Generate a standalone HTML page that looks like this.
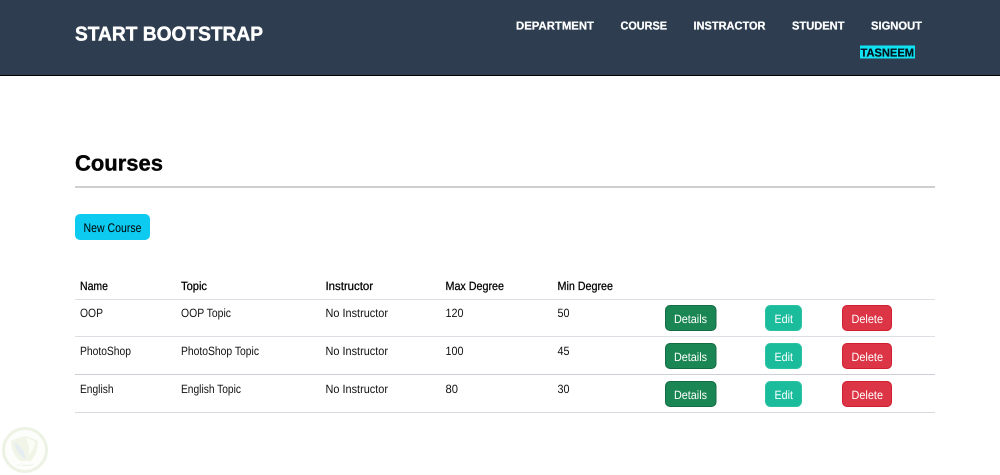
<!DOCTYPE html>
<html lang="en">
<head>
<meta charset="utf-8">
<title>Courses</title>
<style>
html,body{margin:0;padding:0;background:#fff;width:1000px;height:475px;overflow:hidden}
svg{display:block}
text{font-family:"Liberation Sans",sans-serif;text-rendering:geometricPrecision}
.b{font-weight:bold}
.n{font-size:11.5px;font-weight:bold;fill:#fff;stroke:#fff;stroke-width:.25px}
.t{font-size:12px;fill:#111}
.h{font-size:12px;fill:#000;stroke:#000;stroke-width:.25px}
.w{font-size:12px;fill:#fff}
</style>
</head>
<body>
<svg width="1000" height="475" viewBox="0 0 1000 475" xmlns="http://www.w3.org/2000/svg">
<rect width="1000" height="75" fill="#2e3e50"/>
<rect y="75" width="1000" height="1" fill="#000"/>
<text class="b" x="75" y="40.5" font-size="20" fill="#fff" stroke="#fff" stroke-width=".45" textLength="188" lengthAdjust="spacingAndGlyphs">START BOOTSTRAP</text>
<text class="n" x="516" y="29.5" textLength="78" lengthAdjust="spacingAndGlyphs">DEPARTMENT</text>
<text class="n" x="620.5" y="29.5" textLength="46.5" lengthAdjust="spacingAndGlyphs">COURSE</text>
<text class="n" x="693.5" y="29.5" textLength="72" lengthAdjust="spacingAndGlyphs">INSTRACTOR</text>
<text class="n" x="792" y="29.5" textLength="52.5" lengthAdjust="spacingAndGlyphs">STUDENT</text>
<text class="n" x="871" y="29.5" textLength="51" lengthAdjust="spacingAndGlyphs">SIGNOUT</text>
<rect x="860" y="45.5" width="55" height="13" fill="#10e2f2"/>
<text class="n" x="860.5" y="56.5" style="fill:#04121c;stroke:#04121c" textLength="53.5" lengthAdjust="spacingAndGlyphs">TASNEEM</text>

<text class="b" x="75" y="170.5" font-size="22" fill="#050505" stroke="#050505" stroke-width=".4" textLength="88" lengthAdjust="spacingAndGlyphs">Courses</text>
<rect x="75" y="186" width="860" height="2" fill="#cfcfcf"/>

<rect x="75" y="214" width="75" height="26" rx="5" fill="#0dcaf0"/>
<text class="t" x="83.5" y="232" style="font-size:12.5px;fill:#000" textLength="58" lengthAdjust="spacingAndGlyphs">New Course</text>

<text class="h" x="80" y="290" textLength="28" lengthAdjust="spacingAndGlyphs">Name</text>
<text class="h" x="181" y="290" textLength="26" lengthAdjust="spacingAndGlyphs">Topic</text>
<text class="h" x="325.5" y="290" textLength="47.5" lengthAdjust="spacingAndGlyphs">Instructor</text>
<text class="h" x="445.5" y="290" textLength="58.5" lengthAdjust="spacingAndGlyphs">Max Degree</text>
<text class="h" x="557.5" y="290" textLength="55.5" lengthAdjust="spacingAndGlyphs">Min Degree</text>

<rect x="75" y="299" width="860" height="1" fill="#dcdfe4"/>
<rect x="75" y="336" width="860" height="1" fill="#dcdfe4"/>
<rect x="75" y="374" width="860" height="1" fill="#ccd0d6"/>
<rect x="75" y="412" width="860" height="1" fill="#d6d9dd"/>

<text class="t" x="80" y="317" textLength="23" lengthAdjust="spacingAndGlyphs">OOP</text>
<text class="t" x="181" y="317" textLength="50" lengthAdjust="spacingAndGlyphs">OOP Topic</text>
<text class="t" x="325.5" y="317" textLength="62.5" lengthAdjust="spacingAndGlyphs">No Instructor</text>
<text class="t" x="445.5" y="317" textLength="18" lengthAdjust="spacingAndGlyphs">120</text>
<text class="t" x="557.5" y="317" textLength="12" lengthAdjust="spacingAndGlyphs">50</text>

<text class="t" x="80" y="355" textLength="51" lengthAdjust="spacingAndGlyphs">PhotoShop</text>
<text class="t" x="181" y="355" textLength="78" lengthAdjust="spacingAndGlyphs">PhotoShop Topic</text>
<text class="t" x="325.5" y="355" textLength="62.5" lengthAdjust="spacingAndGlyphs">No Instructor</text>
<text class="t" x="445.5" y="355" textLength="18" lengthAdjust="spacingAndGlyphs">100</text>
<text class="t" x="557.5" y="355" textLength="12" lengthAdjust="spacingAndGlyphs">45</text>

<text class="t" x="80" y="393" textLength="33.5" lengthAdjust="spacingAndGlyphs">English</text>
<text class="t" x="181" y="393" textLength="60" lengthAdjust="spacingAndGlyphs">English Topic</text>
<text class="t" x="325.5" y="393" textLength="62.5" lengthAdjust="spacingAndGlyphs">No Instructor</text>
<text class="t" x="445.5" y="393" textLength="12.5" lengthAdjust="spacingAndGlyphs">80</text>
<text class="t" x="557.5" y="393" textLength="12" lengthAdjust="spacingAndGlyphs">30</text>

<rect x="665.5" y="305.5" width="50.5" height="25" rx="4.5" fill="#1a8653" stroke="#146c43"/>
<rect x="765.5" y="305.5" width="36" height="25" rx="5" fill="#1abc9c" stroke="#2cc2a4"/>
<rect x="842.5" y="305.5" width="49" height="25" rx="4.5" fill="#dc3545" stroke="#cf1f30"/>
<text class="w" x="674" y="322.8" textLength="33" lengthAdjust="spacingAndGlyphs">Details</text>
<text class="w" x="774.5" y="322.8" textLength="18.5" lengthAdjust="spacingAndGlyphs">Edit</text>
<text class="w" x="851.5" y="322.8" textLength="31.5" lengthAdjust="spacingAndGlyphs">Delete</text>

<rect x="665.5" y="343.5" width="50.5" height="25" rx="4.5" fill="#1a8653" stroke="#146c43"/>
<rect x="765.5" y="343.5" width="36" height="25" rx="5" fill="#1abc9c" stroke="#2cc2a4"/>
<rect x="842.5" y="343.5" width="49" height="25" rx="4.5" fill="#dc3545" stroke="#cf1f30"/>
<text class="w" x="674" y="360.8" textLength="33" lengthAdjust="spacingAndGlyphs">Details</text>
<text class="w" x="774.5" y="360.8" textLength="18.5" lengthAdjust="spacingAndGlyphs">Edit</text>
<text class="w" x="851.5" y="360.8" textLength="31.5" lengthAdjust="spacingAndGlyphs">Delete</text>

<rect x="665.5" y="381.5" width="50.5" height="25" rx="4.5" fill="#1a8653" stroke="#146c43"/>
<rect x="765.5" y="381.5" width="36" height="25" rx="5" fill="#1abc9c" stroke="#2cc2a4"/>
<rect x="842.5" y="381.5" width="49" height="25" rx="4.5" fill="#dc3545" stroke="#cf1f30"/>
<text class="w" x="674" y="398.8" textLength="33" lengthAdjust="spacingAndGlyphs">Details</text>
<text class="w" x="774.5" y="398.8" textLength="18.5" lengthAdjust="spacingAndGlyphs">Edit</text>
<text class="w" x="851.5" y="398.8" textLength="31.5" lengthAdjust="spacingAndGlyphs">Delete</text>

<circle cx="25" cy="450" r="21.5" fill="#fdfefc" stroke="#edf3e4" stroke-width="3"/>
<path d="M11 441Q17 438 25 436Q33 438 38 441Q38 453 31 461H20Q11 453 11 441Z" fill="#f1f5e8"/>
<path d="M14 442Q16 453 25 459Q26 449 14 442Z" fill="#e6edf0"/>
<path d="M25 438Q31 439 35 442Q34 450 28 456Q31 447 25 438Z" fill="#fafcf6"/>
<text x="25" y="466" text-anchor="middle" font-size="5" fill="#e8efe0" style="font-family:'Liberation Sans','Noto Sans CJK SC',sans-serif">خمسات</text>
</svg>
</body>
</html>
